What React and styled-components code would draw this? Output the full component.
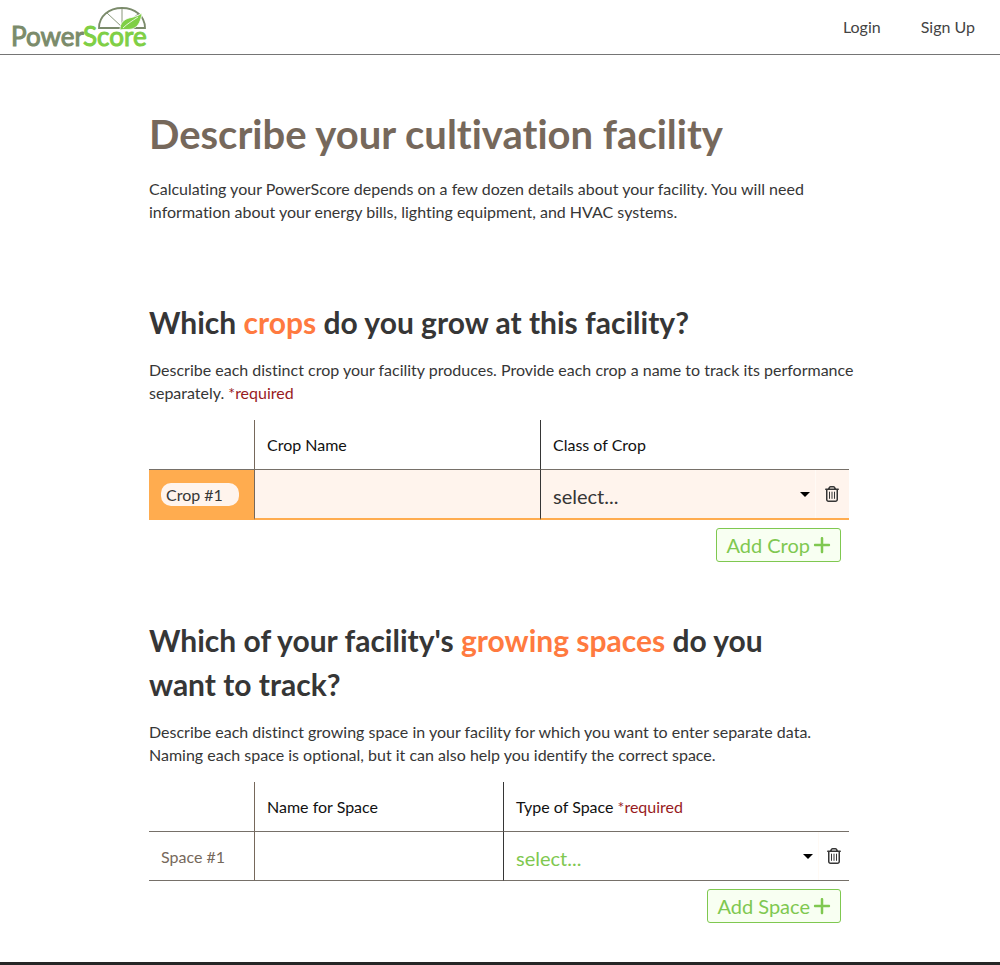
import React from "react";
import styled, { createGlobalStyle } from "styled-components";
import { FaPlus, FaRegTrashCan } from "react-icons/fa6";

const colors = {
  text: "#363636",
  brown: "#76685b",
  rule: "#767069",
  orange: "#ff7a40",
  amber: "#ffac4f",
  peach: "#fff4ed",
  green: "#7fc850",
  mint: "#f8fff2",
  red: "#981b1e",
};

const GlobalStyle = createGlobalStyle`
  *, *::before, *::after { box-sizing: border-box; }
  body {
    margin: 0;
    background: #fff;
    color: ${colors.text};
    font-family: Lato, "Liberation Sans", sans-serif;
    font-size: 16px;
    line-height: 23px;
    font-variant-ligatures: none;
  }
`;

const Header = styled.header`
  display: flex;
  align-items: center;
  justify-content: space-between;
  height: 55px;
  padding: 0 25px 2px 12px;
  border-bottom: 1px solid #757575;
`;

const LogoLink = styled.a`
  display: block;
  svg { display: block; }
`;

const Nav = styled.nav`
  display: flex;
  gap: 40px;
`;

const NavLink = styled.a`
  color: #444;
  text-decoration: none;
`;

const Main = styled.main`
  padding: 52px 18px 39px 28px;
`;

const Content = styled.div`
  max-width: 712px;
  margin: 0 auto;
`;

const Title = styled.h1`
  margin: 0 0 15px;
  color: ${colors.brown};
  font-size: 40px;
  line-height: 55px;
  font-weight: 700;
`;

const Section = styled.section`
  margin-top: ${(p) => p.$gap}px;
`;

const Heading = styled.h2`
  max-width: 680px;
  margin: 0 0 14px;
  font-size: 30px;
  line-height: 44px;
  font-weight: 700;
`;

const Accent = styled.span`
  color: ${colors.orange};
`;

const Text = styled.p`
  margin: 0;
`;

const Required = styled.span`
  color: ${colors.red};
`;

const Panel = styled.div`
  max-width: 700px;
  margin-top: 16px;
`;

const Table = styled.table`
  width: 100%;
  table-layout: fixed;
  border-collapse: separate;
  border-spacing: 0;
`;

const Col = styled.col`
  width: ${(p) => p.$width}px;
`;

const HeadCell = styled.th`
  height: 50px;
  padding: 0 12px;
  border-bottom: 1px solid ${colors.rule};
  border-right: ${(p) => (p.$rule ? `1px solid ${p.$rule}` : "0")};
  color: #111;
  font-weight: 400;
  text-align: left;
`;

const Cell = styled.td`
  height: ${(p) => (p.$active ? 50 : 49)}px;
  padding: 0;
  background: ${(p) => (p.$active ? colors.peach : "#fff")};
  border-bottom: ${(p) => (p.$active ? `2px solid ${colors.amber}` : `1px solid ${colors.rule}`)};
  border-right: ${(p) => (p.$rule ? `1px solid ${p.$rule}` : "0")};
`;

const RowHead = styled(Cell).attrs({ as: "th", scope: "row" })`
  padding: 0 12px;
  background: ${(p) => (p.$active ? colors.amber : "#fff")};
  color: ${colors.brown};
  font-weight: 400;
  text-align: left;
`;

const Pill = styled.span`
  display: block;
  width: 78px;
  padding: 0 5px;
  border-radius: 10px;
  background: ${colors.peach};
  color: ${colors.text};
`;

const NameInput = styled.input`
  display: block;
  width: 100%;
  height: 48px;
  padding: 0 12px;
  border: 0;
  background: transparent;
  color: ${colors.text};
  font: inherit;
`;

const SelectWrap = styled.div`
  display: flex;
  align-items: center;
  position: relative;
`;

const Select = styled.select`
  width: 100%;
  height: 48px;
  padding: 4px 24px 0 12px;
  appearance: none;
  border: 0;
  background: transparent;
  color: ${(p) => (p.$active ? colors.text : colors.green)};
  font: inherit;
  font-size: 20px;
`;

const Caret = styled.span`
  position: absolute;
  right: 5px;
  top: 22px;
  border: 5px solid transparent;
  border-top-color: #000;
  border-bottom: 0;
  pointer-events: none;
`;

const IconButton = styled.button`
  display: flex;
  align-items: center;
  justify-content: center;
  width: 100%;
  height: 48px;
  padding: 0;
  border: 0;
  border-left: 1px solid #fffaf5;
  background: transparent;
  color: ${colors.text};
  font-size: 16px;
`;

const Actions = styled.div`
  display: flex;
  justify-content: flex-end;
  padding: 8px 8px 0;
`;

const AddButton = styled.button`
  display: flex;
  align-items: center;
  gap: 2px;
  height: 34px;
  padding: 0 8px 0 9px;
  border: 1px solid ${colors.green};
  border-radius: 3px;
  background: ${colors.mint};
  color: ${colors.green};
  font: inherit;
  font-size: 20px;
`;

const Footer = styled.footer`
  height: 3px;
  background: #262626;
`;

function Logo() {
  return (
    <svg width="138" height="53" viewBox="0 0 138 53" role="img" aria-label="PowerScore">
      <g fill="none" stroke="#7b8b6b">
        <path d="M87 28C87 16 97 8 110 8C123 8 133 16 133 28Z" strokeWidth="1.8" />
        <path d="M110 27V9M110 27L95 13M110 27L126 14" strokeWidth="0.9" />
      </g>
      <path
        d="M108 30C108 23 111 20 117 18C122 17 126 16 130 13C129 20 127 27 120 29C116 30 112 29 108 30Z"
        fill="#7fcf45"
        stroke="#fff"
        strokeWidth="0.8"
      />
      <path d="M111 28C115 24 120 21 126 17" stroke="#fff" strokeWidth="0.8" fill="none" />
      <g fontFamily="Lato, sans-serif" fontSize="26" strokeWidth="1">
        <text x="-1" y="46" fill="#7b8b6b" stroke="#7b8b6b">Power</text>
        <text x="71" y="46" fill="#7fcf45" stroke="#7fcf45">Score</text>
      </g>
    </svg>
  );
}

function EntryTable({ id, label, nameHeader, typeHeader, required, active, nameWidth, actionWidth }) {
  return (
    <Table>
      <colgroup>
        <Col $width={106} />
        <Col $width={nameWidth} />
        <col />
        <Col $width={actionWidth} />
      </colgroup>
      <thead>
        <tr>
          <HeadCell $rule={colors.brown} />
          <HeadCell scope="col" id={`${id}-name`} $rule="#363636">{nameHeader}</HeadCell>
          <HeadCell scope="col" id={`${id}-type`} colSpan={2}>
            {typeHeader} {required && <Required>*required</Required>}
          </HeadCell>
        </tr>
      </thead>
      <tbody>
        <tr>
          <RowHead $active={active} $rule={colors.brown}>
            {active ? <Pill>{label}</Pill> : label}
          </RowHead>
          <Cell $active={active} $rule="#363636">
            <NameInput type="text" aria-labelledby={`${id}-name`} />
          </Cell>
          <Cell $active={active}>
            <SelectWrap>
              <Select $active={active} aria-labelledby={`${id}-type`} defaultValue="">
                <option value="">select...</option>
              </Select>
              <Caret />
            </SelectWrap>
          </Cell>
          <Cell $active={active}>
            <IconButton type="button" aria-label={`Delete ${label}`}>
              <FaRegTrashCan />
            </IconButton>
          </Cell>
        </tr>
      </tbody>
    </Table>
  );
}

export default function App() {
  return (
    <>
      <GlobalStyle />
      <Header>
        <LogoLink href="#home"><Logo /></LogoLink>
        <Nav>
          <NavLink href="#login">Login</NavLink>
          <NavLink href="#signup">Sign Up</NavLink>
        </Nav>
      </Header>
      <Main>
        <Content>
          <Title>Describe your cultivation facility</Title>
          <Text>
            Calculating your PowerScore depends on a few dozen details about your facility. You will
            need information about your energy bills, lighting equipment, and HVAC systems.
          </Text>

          <Section $gap={77}>
            <Heading>Which <Accent>crops</Accent> do you grow at this facility?</Heading>
            <Text>
              Describe each distinct crop your facility produces. Provide each crop a name to track
              its performance separately. <Required>*required</Required>
            </Text>
            <Panel>
              <EntryTable
                id="crop"
                label="Crop #1"
                nameHeader="Crop Name"
                typeHeader="Class of Crop"
                active
                nameWidth={286}
                actionWidth={34}
              />
              <Actions>
                <AddButton type="button">Add Crop <FaPlus /></AddButton>
              </Actions>
            </Panel>
          </Section>

          <Section $gap={56}>
            <Heading>
              Which of your facility's <Accent>growing spaces</Accent> do you want to track?
            </Heading>
            <Text>
              Describe each distinct growing space in your facility for which you want to enter
              separate data. Naming each space is optional, but it can also help you identify the
              correct space.
            </Text>
            <Panel>
              <EntryTable
                id="space"
                label="Space #1"
                nameHeader="Name for Space"
                typeHeader="Type of Space"
                required
                nameWidth={249}
                actionWidth={31}
              />
              <Actions>
                <AddButton type="button">Add Space <FaPlus /></AddButton>
              </Actions>
            </Panel>
          </Section>
        </Content>
      </Main>
      <Footer />
    </>
  );
}
